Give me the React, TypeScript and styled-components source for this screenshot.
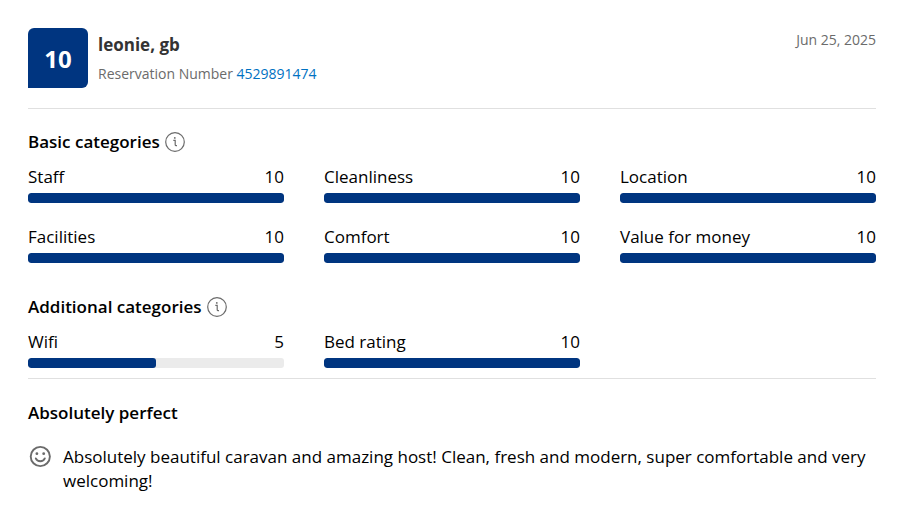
import React from "react";
import styled, { createGlobalStyle } from "styled-components";

const GlobalStyle = createGlobalStyle`
  * { box-sizing: border-box; }
  body { margin: 0; background: #fff; color: #000; font-family: "Open Sans", "Noto Sans", sans-serif; font-size: 17px; line-height: 24px; }
  h1, h2, h3, p { margin: 0; }
`;

const Card = styled.article`
  padding: 28px 23px 12px 28px;
`;

const Header = styled.header`
  display: flex;
  align-items: flex-start;
  gap: 10px;
  padding-bottom: 20px;
  border-bottom: 1px solid #e0e0e0;
`;

const ScoreBadge = styled.div`
  display: flex;
  align-items: center;
  justify-content: center;
  width: 60px;
  height: 60px;
  padding-top: 2px;
  border-radius: 6px 6px 6px 0;
  background: #003580;
  color: #fff;
  font-size: 24px;
  font-weight: 700;
`;

const Guest = styled.div`
  flex: 1;
  padding-top: 4px;
`;

const GuestName = styled.h1`
  padding-bottom: 4px;
  color: #333;
  font-size: 17px;
  line-height: 26px;
  font-weight: 700;
`;

const Reservation = styled.p`
  color: #6b6b6b;
  font-size: 14px;
`;

const ReservationLink = styled.a`
  color: #0071c2;
  text-decoration: none;
`;

const DateText = styled.time`
  color: #6b6b6b;
  font-size: 14px;
`;

const Section = styled.section`
  padding: 20px 0 11px;
`;

const AdditionalSection = styled(Section)`
  padding-bottom: 10px;
  border-bottom: 1px solid #e0e0e0;
`;

const Heading = styled.h2`
  display: flex;
  align-items: center;
  gap: 5px;
  padding-bottom: 10px;
  font-size: 17px;
  line-height: 26px;
  font-weight: 600;
`;

const InfoButton = styled.button`
  display: flex;
  padding: 0;
  border: 0;
  background: none;
  color: #6b6b6b;
`;

const Grid = styled.div`
  display: grid;
  grid-template-columns: repeat(3, 1fr);
  gap: 22px 40px;
`;

const Label = styled.div`
  display: flex;
  justify-content: space-between;
  padding-bottom: 4px;
`;

const Track = styled.div`
  height: 10px;
  border-radius: 3px;
  overflow: hidden;
  background: #ebebeb;
`;

const Fill = styled.div`
  height: 100%;
  border-radius: 3px;
  background: #003580;
`;

const Review = styled.section`
  padding-top: 21px;
`;

const Comment = styled.div`
  display: flex;
  align-items: flex-start;
  gap: 11px;
  padding-top: 9px;
`;

const CommentText = styled.p`
  flex: 1;
`;

const InfoIcon = () => (
  <svg width="20" height="20" viewBox="0 0 20 20" fill="none" stroke="currentColor" aria-hidden="true">
    <circle cx="10" cy="10" r="9.3" strokeWidth="1.2" />
    <path d="M8.3 8.4h1.9v4.3q0 1 1 1h.8" strokeWidth="1.2" />
    <circle cx="9.8" cy="5.9" r=".9" fill="currentColor" stroke="none" />
  </svg>
);

const SmileIcon = () => (
  <svg width="24" height="24" viewBox="0 0 24 24" fill="none" stroke="#6b6b6b" strokeWidth="1.9" strokeLinecap="round" aria-hidden="true">
    <circle cx="12.3" cy="11.5" r="9.6" />
    <path d="M7.8 13.4c1.6 3.8 7.4 3.8 9 0" />
    <circle cx="8.9" cy="8.7" r="1.4" fill="#6b6b6b" stroke="none" />
    <circle cx="15.7" cy="8.7" r="1.4" fill="#6b6b6b" stroke="none" />
  </svg>
);

type Rating = { name: string; score: number };

const basic: Rating[] = [
  { name: "Staff", score: 10 },
  { name: "Cleanliness", score: 10 },
  { name: "Location", score: 10 },
  { name: "Facilities", score: 10 },
  { name: "Comfort", score: 10 },
  { name: "Value for money", score: 10 },
];

const additional: Rating[] = [
  { name: "Wifi", score: 5 },
  { name: "Bed rating", score: 10 },
];

const Ratings = ({ items }: { items: Rating[] }) => (
  <Grid>
    {items.map(({ name, score }) => (
      <div key={name}>
        <Label><span>{name}</span><span>{score}</span></Label>
        <Track role="meter" aria-label={name} aria-valuemin={0} aria-valuemax={10} aria-valuenow={score}>
          <Fill style={{ width: `${score * 10}%` }} />
        </Track>
      </div>
    ))}
  </Grid>
);

export default function App() {
  return (
    <>
      <GlobalStyle />
      <Card>
        <Header>
          <ScoreBadge>10</ScoreBadge>
          <Guest>
            <GuestName>leonie, gb</GuestName>
            <Reservation>Reservation Number <ReservationLink href="#reservation">4529891474</ReservationLink></Reservation>
          </Guest>
          <DateText dateTime="2025-06-25">Jun 25, 2025</DateText>
        </Header>
        <Section>
          <Heading>Basic categories<InfoButton type="button" aria-label="About basic categories"><InfoIcon /></InfoButton></Heading>
          <Ratings items={basic} />
        </Section>
        <AdditionalSection>
          <Heading>Additional categories<InfoButton type="button" aria-label="About additional categories"><InfoIcon /></InfoButton></Heading>
          <Ratings items={additional} />
        </AdditionalSection>
        <Review>
          <Heading>Absolutely perfect</Heading>
          <Comment>
            <SmileIcon />
            <CommentText>Absolutely beautiful caravan and amazing host! Clean, fresh and modern, super comfortable and very welcoming!</CommentText>
          </Comment>
        </Review>
      </Card>
    </>
  );
}
